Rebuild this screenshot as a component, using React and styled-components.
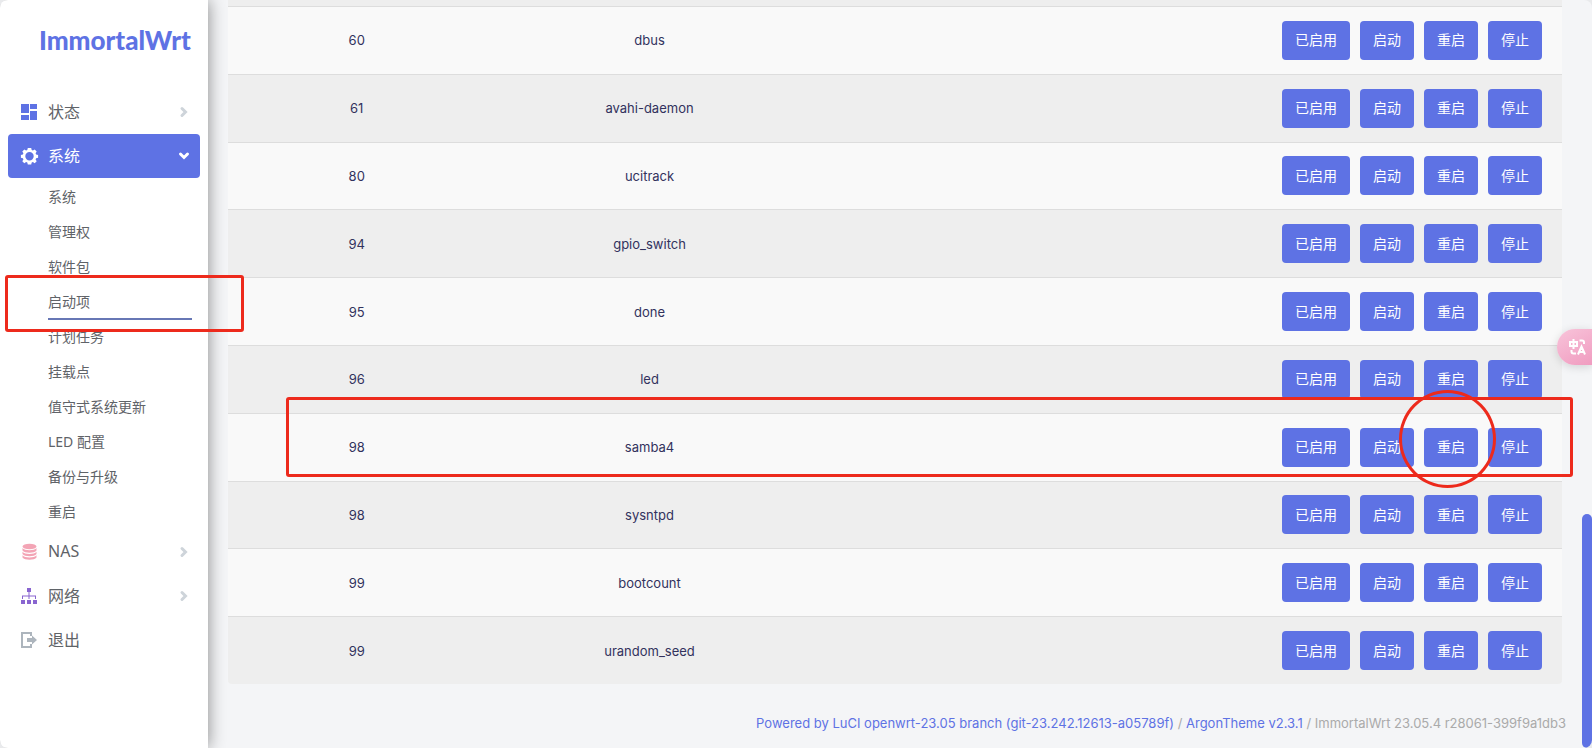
import React from "react";
import styled, { createGlobalStyle } from "styled-components";

const cjk = '"Noto Sans CJK SC", sans-serif';

const GlobalStyle = createGlobalStyle`
  * { box-sizing: border-box; }
  body {
    margin: 0;
    background: #e9eaec;
    font-family: Inter, ${cjk};
    font-size: 14px;
    color: #32325d;
  }
  ul { list-style: none; margin: 0; padding: 0; }
  a { color: inherit; text-decoration: none; }
`;

const Page = styled.div`
  position: relative;
  display: flex;
  min-height: 100vh;
  overflow: hidden;
  border-radius: 8px;
  background: #f4f5f7;
`;

const Sidebar = styled.aside`
  position: relative;
  flex: 0 0 208px;
  min-width: 0;
  background: #fff;
  box-shadow: 0 0 16px rgba(0, 0, 0, 0.45);
  font-family: "Noto Sans", ${cjk};
  color: #5f6368;
`;

const Brand = styled.a`
  display: block;
  padding: 20px 0 30px 39px;
  font-family: Lato, sans-serif;
  font-size: 26px;
  line-height: 40px;
  font-weight: 900;
  && { color: #5e72e4; }
`;

const Menu = styled.ul`
  display: flex;
  flex-direction: column;
`;

const MenuLink = styled.a`
  display: flex;
  align-items: center;
  height: 44px;
  margin: 0 8px;
  padding: 0 11px 0 12px;
  border-radius: 4px;
  font-size: 16px;
  background: ${(p) => (p.$active ? "#5e72e4" : "transparent")};
  && { color: ${(p) => (p.$active ? "#fff" : "#5f6368")}; }
`;

const MenuIcon = styled.svg`
  width: 19px;
  height: 18px;
  margin-right: 9px;
  color: ${(p) => p.$color};
`;

const MenuLabel = styled.span`
  flex: 1;
  padding-bottom: 2px;
`;

const Chevron = styled.svg`
  width: 10px;
  height: 12px;
  color: ${(p) => (p.$open ? "#fff" : "#ced4da")};
  transform: ${(p) => (p.$open ? "rotate(90deg)" : "none")};
`;

const SubMenu = styled.ul`
  padding: 2px 16px 0 48px;
`;

const SubLink = styled.a`
  display: block;
  height: 35px;
  line-height: 34px;
  border-bottom: 2px solid ${(p) => (p.$active ? "#6777b5" : "transparent")};
`;

const Main = styled.main`
  flex: 1;
  min-width: 0;
  padding: 0 30px 0 20px;
`;

const Table = styled.table`
  width: 100%;
  height: 684px;
  table-layout: fixed;
  border-collapse: separate;
  border-spacing: 0;
  border-top: 6px solid #eee;
  border-radius: 0 0 4px 4px;
  overflow: hidden;
  font-size: 13px;
  text-align: center;
`;

const Row = styled.tr`
  background: #f9f9f9;
  &:nth-child(even) { background: #eee; }
`;

const Cell = styled.td`
  padding: 0;
  border-top: 1px solid #ddd;
  width: ${(p) => p.$width || "auto"};
`;

const Actions = styled.div`
  display: flex;
  justify-content: flex-end;
  gap: 10px;
  padding-right: 20px;
`;

const ActionButton = styled.button`
  height: 39px;
  padding: 0 13px 2px;
  border: 0;
  border-radius: 4px;
  background: #5e72e4;
  color: #fff;
  font: 14px ${cjk};
`;

const Footer = styled.footer`
  padding: 29px 0 0;
  margin-right: -4px;
  text-align: right;
  font-size: 13px;
  line-height: 20px;
  white-space: nowrap;
  color: #aaa;
  a { color: #5e72e4; }
`;

const ScrollThumb = styled.div`
  position: absolute;
  right: 0;
  bottom: 0;
  width: 10px;
  height: 234px;
  border-radius: 5px;
  background: #5e72e4;
`;

const TranslateButton = styled.button`
  position: absolute;
  right: 0;
  top: 329px;
  width: 35px;
  height: 36px;
  padding: 0 0 0 11px;
  border: 0;
  border-radius: 18px 0 0 18px;
  background: linear-gradient(150deg, #f8c4da, #f09cc0);
  box-shadow: 0 2px 10px rgba(0, 0, 0, 0.14);
  display: flex;
  align-items: center;
`;

const Highlight = styled.div`
  position: absolute;
  border: 3px solid #ed2a1c;
  pointer-events: none;
`;

const MenuHighlight = styled(Highlight)`
  left: 5px;
  top: 275px;
  width: 239px;
  height: 57px;
  border-radius: 3px;
`;

const RowHighlight = styled(Highlight)`
  left: 286px;
  right: 19px;
  top: 397px;
  height: 80px;
  border-radius: 3px;
`;

const ButtonHighlight = styled(Highlight)`
  right: 96px;
  top: 390px;
  width: 97px;
  height: 98px;
  border-radius: 50%;
`;

const icons = {
  dashboard: (
    <path fill="currentColor" d="M1 1h8v9H1zM10 1h7v5h-7zM10 8h7v9h-7zM1 12h8v5H1z" />
  ),
  gear: (
    <path
      fill="currentColor"
      fillRule="evenodd"
      d="M7.8 1h3.4l.5 2 1.2.5 1.8-1.1 2 2-1.1 1.8.5 1.2 2 .5v2.8l-2 .5-.5 1.2 1.1 1.8-2 2-1.8-1.1-1.2.5-.5 1.9H7.8l-.5-1.900-1.200-.5-1.800 1.100-2-2 1.100-1.800-.5-1.200-2-.5V7.900l2-.5.5-1.200-1.100-1.800 2-2 1.800 1.100 1.200-.5zM9.500 5a4.200 4.200 0 1 0 0 8.400 4.200 4.200 0 0 0 0-8.400z"
    />
  ),
  database: (
    <g fill="currentColor">
      <ellipse cx="9.5" cy="3.5" rx="7" ry="2.8" />
      <path d="M2.5 5c2 3 12 3 14 0v2.500c-2 3-12 3-14 0zM2.500 8.700c2 3 12 3 14 0v2.300c-2 3-12 3-14 0zM2.500 12.300c2 3 12 3 14 0v2.200c-2 3-12 3-14 0z" />
    </g>
  ),
  network: (
    <g fill="currentColor">
      <path d="M7 1h4v4H7zM1 13h4v4H1zM7 13h4v4H7zM13 13h4v4h-4z" />
      <path d="M8.500 5h1v3.500H16V12h-1V9.500H9.500V12h-1V9.500H3V12H2V8.500h6.500z" />
    </g>
  ),
  exit: (
    <g fill="none" stroke="currentColor" strokeWidth="2">
      <path d="M11 5V2H2v14h9v-3" />
      <path fill="currentColor" stroke="none" d="M7 7h5V4.500l5 4.500-5 4.500V11H7z" />
    </g>
  ),
};

const subItems = [
  "系统", "管理权", "软件包", "启动项", "计划任务",
  "挂载点", "值守式系统更新", "LED 配置", "备份与升级", "重启",
];

const menu = [
  { label: "状态", icon: "dashboard", color: "#5e72e4", arrow: true },
  { label: "系统", icon: "gear", color: "#fff", arrow: true, children: subItems },
  { label: "NAS", icon: "database", color: "#f3a4b5", arrow: true },
  { label: "网络", icon: "network", color: "#8965d0", arrow: true },
  { label: "退出", icon: "exit", color: "#adb5bd" },
];

const services = [
  [60, "dbus"], [61, "avahi-daemon"], [80, "ucitrack"], [94, "gpio_switch"],
  [95, "done"], [96, "led"], [98, "samba4"], [98, "sysntpd"],
  [99, "bootcount"], [99, "urandom_seed"],
];

const actions = ["已启用", "启动", "重启", "停止"];

function MenuEntry({ item }) {
  const open = Boolean(item.children);
  return (
    <li>
      <MenuLink href="#" $active={open}>
        <MenuIcon viewBox="0 0 19 18" $color={item.color} aria-hidden="true">
          {icons[item.icon]}
        </MenuIcon>
        <MenuLabel>{item.label}</MenuLabel>
        {item.arrow && (
          <Chevron viewBox="0 0 10 12" $open={open} aria-hidden="true">
            <path d="M3 2.500 6.500 6 3 9.500" fill="none" stroke="currentColor" strokeWidth="3" strokeLinecap="round" />
          </Chevron>
        )}
      </MenuLink>
      {open && (
        <SubMenu>
          {item.children.map((name) => (
            <li key={name}>
              <SubLink href="#" $active={name === "启动项"}>{name}</SubLink>
            </li>
          ))}
        </SubMenu>
      )}
    </li>
  );
}

export default function App() {
  return (
    <Page>
      <GlobalStyle />
      <Sidebar>
        <Brand href="#">ImmortalWrt</Brand>
        <nav>
          <Menu>
            {menu.map((item) => <MenuEntry key={item.label} item={item} />)}
          </Menu>
        </nav>
      </Sidebar>
      <Main>
        <Table>
          <tbody>
            {services.map(([order, name]) => (
              <Row key={name}>
                <Cell $width="19.3%">{order}</Cell>
                <Cell $width="24.6%">{name}</Cell>
                <Cell>
                  <Actions>
                    {actions.map((a) => <ActionButton key={a} type="button">{a}</ActionButton>)}
                  </Actions>
                </Cell>
              </Row>
            ))}
          </tbody>
        </Table>
        <Footer>
          <a href="#">Powered by LuCI openwrt-23.05 branch (git-23.242.12613-a05789f)</a>
          {" / "}
          <a href="#">ArgonTheme v2.3.1</a>
          {" / ImmortalWrt 23.05.4 r28061-399f9a1db3"}
        </Footer>
      </Main>
      <ScrollThumb />
      <TranslateButton type="button" aria-label="翻译">
        <svg width="19" height="18" viewBox="0 0 19 18" fill="none" stroke="#fff" strokeWidth="2" aria-hidden="true">
          <path d="M2 4h7v4H2zM5.500 1v10M11.500 2.500h2.500q2 0 2 2V6M3.500 12v1.500q0 2 2 2H8M10 16.500l3.500-8 3.500 8M11 14h5" />
        </svg>
      </TranslateButton>
      <MenuHighlight />
      <RowHighlight />
      <ButtonHighlight />
    </Page>
  );
}
